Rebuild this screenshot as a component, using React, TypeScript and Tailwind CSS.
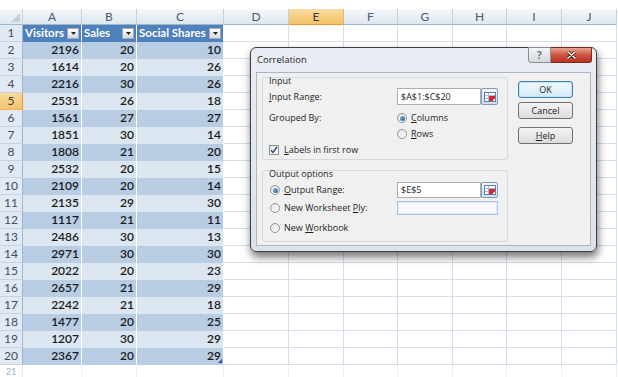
const cols = [
  { name: 'A', w: 'w-[59px]' },
  { name: 'B', w: 'w-[55px]' },
  { name: 'C', w: 'w-[87px]' },
  { name: 'D', w: 'w-[65px]' },
  { name: 'E', w: 'w-[55px]' },
  { name: 'F', w: 'w-[54px]' },
  { name: 'G', w: 'w-[55px]' },
  { name: 'H', w: 'w-[54px]' },
  { name: 'I', w: 'w-[55px]' },
  { name: 'J', w: 'w-[55px]' },
];

const data = [
  [2196, 20, 10],
  [1614, 20, 26],
  [2216, 30, 26],
  [2531, 26, 18],
  [1561, 27, 27],
  [1851, 30, 14],
  [1808, 21, 20],
  [2532, 20, 15],
  [2109, 20, 14],
  [2135, 29, 30],
  [1117, 21, 11],
  [2486, 30, 13],
  [2971, 30, 30],
  [2022, 20, 23],
  [2657, 21, 29],
  [2242, 21, 18],
  [1477, 20, 25],
  [1207, 30, 29],
  [2367, 20, 29],
];

const RowHead = ({ n }: { n: number }) => (
  <div
    className={`flex w-[23px] shrink-0 items-center justify-center border-r border-b text-[12px] ${
      n === 5
        ? 'border-r-[#f29436] border-b-[#f2b35e] bg-gradient-to-b from-[#f9d99b] to-[#f2c46c] text-[#3b3b3b]'
        : 'border-r-[#9eb6ce] border-b-[#c5d3e3] bg-[#e1e9f4] text-[#3f4d62]'
    }`}
  >
    {n}
  </div>
);

const Dropdown = () => (
  <div className="flex h-[11px] w-[12px] shrink-0 items-center justify-center border border-[#a3aab5] bg-gradient-to-b from-white to-[#d6dbe2]">
    <svg width="5" height="3" viewBox="0 0 5 3">
      <path d="M0 0h5L2.5 3z" fill="#222" />
    </svg>
  </div>
);

const EmptyCells = () => (
  <>
    {cols.slice(3).map((c) => (
      <div key={c.name} className={`${c.w} shrink-0 border-r border-b border-[#d6dee9]`} />
    ))}
  </>
);

const Radio = ({ checked }: { checked?: boolean }) => (
  <span className="flex h-[10px] w-[10px] shrink-0 items-center justify-center rounded-full border border-[#8f9499] bg-gradient-to-br from-[#dfe2e5] to-white">
    {checked && <span className="h-[5px] w-[5px] rounded-full bg-gradient-to-br from-[#86bbea] to-[#1b5a93]" />}
  </span>
);

const RefButton = ({ h }: { h: string }) => (
  <div className={`flex w-[17px] ${h} shrink-0 items-center justify-center rounded-[2px] border border-[#7f9db9] bg-gradient-to-b from-[#f3f7fc] to-[#d2deed]`}>
    <svg width="12" height="10" viewBox="0 0 12 10">
      <rect x="0.5" y="0.5" width="11" height="9" fill="#fff" stroke="#5a7fb0" />
      <path d="M1 3.5h10M1 6.5h10M4.5 1v8" stroke="#a9bdd8" />
      <path d="M5 4h6v2l-2.5 3H5z" fill="#d8262a" />
    </svg>
  </div>
);

const Btn = ({ children, primary, className = '' }: { children: React.ReactNode; primary?: boolean; className?: string }) => (
  <div
    className={`flex h-[17px] w-[55px] items-center justify-center rounded-[3px] border ${
      primary
        ? 'border-[#3c7fb1] bg-gradient-to-b from-[#f2f9fd] to-[#d3ebf9] shadow-[inset_0_0_0_1px_#bfe3f8]'
        : 'border-[#707070] bg-gradient-to-b from-[#f4f4f4] to-[#dcdcdc]'
    } ${className}`}
  >
    {children}
  </div>
);

export default function App() {
  return (
    <div className="relative h-[377px] w-[618px] overflow-hidden bg-white pt-[9px] font-['Lato',sans-serif]">
      {/* column headers */}
      <div className="flex h-[16px]">
        <div className="relative w-[23px] shrink-0 border-r border-b border-r-[#c3cfdd] border-b-[#9eb6ce] bg-gradient-to-b from-[#f5f8fb] to-[#dfe6ef]">
          <svg className="absolute right-[2px] bottom-[2px]" width="9" height="9" viewBox="0 0 9 9">
            <path d="M9 0v9H0z" fill="#c4cfdc" />
          </svg>
        </div>
        {cols.map((c) => (
          <div
            key={c.name}
            className={`${c.w} flex shrink-0 items-center justify-center border-r border-b text-[12px] ${
              c.name === 'E'
                ? 'border-r-[#f2b35e] border-b-[#f29436] bg-gradient-to-b from-[#f9dca2] to-[#f2c263] text-[#3b3b3b]'
                : 'border-r-[#c3cfdd] border-b-[#9eb6ce] bg-gradient-to-b from-[#f5f8fb] to-[#dfe6ef] text-[#4a5a70]'
            }`}
          >
            {c.name}
          </div>
        ))}
      </div>

      {/* table header row */}
      <div className="flex h-[17px]">
        <RowHead n={1} />
        {['Visitors', 'Sales', 'Social Shares'].map((t, i) => (
          <div
            key={t}
            className={`${cols[i].w} flex shrink-0 items-center justify-between border-r border-b border-r-white border-b-[#4f81bd] bg-[#4f81bd] pr-[2px] pl-[2px] text-[11.5px] font-bold text-white`}
          >
            <span>{t}</span>
            <Dropdown />
          </div>
        ))}
        <EmptyCells />
      </div>

      {/* data rows */}
      {data.map((vals, r) => {
        const n = r + 2;
        const band = n % 2 === 0 ? 'bg-[#b8cce4] border-b-[#b8cce4]' : 'bg-[#dce6f1] border-b-[#dce6f1]';
        return (
          <div key={n} className="flex h-[17px]">
            <RowHead n={n} />
            {vals.map((v, i) => (
              <div
                key={i}
                className={`${cols[i].w} ${band} relative flex shrink-0 items-center justify-end border-r border-b border-r-white pr-[2px] text-[12px] font-semibold text-[#1a1a1a]`}
              >
                {v}
                {n === 20 && i === 2 && (
                  <svg className="absolute right-[1px] bottom-[1px]" width="4" height="4" viewBox="0 0 4 4">
                    <path d="M4 0v4H0z" fill="#1f4e9c" />
                  </svg>
                )}
              </div>
            ))}
            <EmptyCells />
          </div>
        );
      })}

      {/* row 21, faded */}
      <div className="flex h-[12px]">
        <div className="flex w-[23px] shrink-0 items-end justify-center border-r border-[#e6ecf3] text-[9px] leading-[10px] text-[#a4afbf]">21</div>
        {cols.map((c) => (
          <div key={c.name} className={`${c.w} shrink-0 border-r border-[#eef2f7]`} />
        ))}
      </div>

      {/* Correlation dialog */}
      <div className="absolute top-[47px] left-[250px] h-[205px] w-[347px] rounded-[6px] border border-[#3f3f3f] bg-gradient-to-b from-[#e9eef4] to-[#dbe2ea] font-['Open_Sans',sans-serif] text-[9px] text-[#1e1e1e] shadow-[1px_5px_8px_rgba(0,0,0,0.55)]">
        <div className="flex h-[24px] items-center pl-[6px] text-[9.5px]">Correlation</div>
        <div className="absolute -top-px right-[4px] flex">
          <div className="flex h-[16px] w-[23px] items-center justify-center rounded-bl-[3px] border border-[#8a8f96] bg-gradient-to-b from-[#f3f5f7] to-[#d3d8de] text-[10px] font-bold text-[#6a7078]">
            ?
          </div>
          <div className="flex h-[16px] w-[41px] items-center justify-center rounded-br-[3px] border border-l-0 border-[#7a2a20] bg-gradient-to-b from-[#e9a495] via-[#cc5440] to-[#b9321e]">
            <svg width="9" height="8" viewBox="0 0 9 8">
              <path d="M1 1l7 6M8 1L1 7" stroke="#5a1a12" strokeWidth="3" strokeLinecap="round" />
              <path d="M1 1l7 6M8 1L1 7" stroke="#fff" strokeWidth="1.6" strokeLinecap="round" />
            </svg>
          </div>
        </div>

        <div className="mx-[5px] flex h-[174px] border border-[#a9b6c4] bg-[#f0f0f0]">
          <div className="pt-[4px] pl-[5px]">
            {/* Input group */}
            <div className="h-[83px] w-[246px] rounded-[3px] border border-[#d3d9df] pl-[6px]">
              <div className="-mt-[4px] h-[14px] leading-[14px]">Input</div>
              <div className="flex h-[17px] items-center">
                <span className="w-[128px]">
                  <u>I</u>nput Range:
                </span>
                <div className="flex h-[17px] w-[84px] items-center border border-[#abadb3] bg-white pl-[3px]">$A$1:$C$20</div>
                <RefButton h="h-[17px]" />
              </div>
              <div className="mt-[5px] flex h-[16px] items-center">
                <span className="w-[128px]">Grouped By:</span>
                <Radio checked />
                <span className="ml-[4px]">
                  <u>C</u>olumns
                </span>
              </div>
              <div className="flex h-[16px] items-center pl-[128px]">
                <Radio />
                <span className="ml-[4px]">
                  <u>R</u>ows
                </span>
              </div>
              <div className="flex h-[16px] items-center">
                <span className="flex h-[10px] w-[10px] items-center justify-center border border-[#8f9499] bg-gradient-to-br from-[#e2e4e7] to-white">
                  <svg width="8" height="8" viewBox="0 0 8 8">
                    <path d="M1 4.2l2 2.2L7 1" fill="none" stroke="#2c4a73" strokeWidth="1.4" />
                  </svg>
                </span>
                <span className="ml-[5px]">
                  <u>L</u>abels in first row
                </span>
              </div>
            </div>

            {/* Output group */}
            <div className="mt-[10px] h-[72px] w-[246px] rounded-[3px] border border-[#d3d9df] pl-[6px]">
              <div className="-mt-[4px] h-[14px] leading-[14px]">Output options</div>
              <div className="mt-px flex h-[16px] items-center">
                <span className="flex w-[128px] items-center pl-px">
                  <Radio checked />
                  <span className="ml-[4px]">
                    <u>O</u>utput Range:
                  </span>
                </span>
                <div className="flex h-[16px] w-[84px] items-center border border-[#abadb3] bg-white pl-[3px]">$E$5</div>
                <RefButton h="h-[16px]" />
              </div>
              <div className="flex h-[19px] items-center">
                <span className="flex w-[128px] items-center pl-px">
                  <Radio />
                  <span className="ml-[4px]">
                    New Worksheet <u>P</u>ly:
                  </span>
                </span>
                <div className="h-[14px] w-[101px] border border-[#a9c3df] bg-[#f7f9fb] shadow-[inset_0_0_0_1px_#e4edf7]" />
              </div>
              <div className="flex h-[21px] items-center pl-px">
                <Radio />
                <span className="ml-[4px]">
                  New <u>W</u>orkbook
                </span>
              </div>
            </div>
          </div>

          {/* buttons */}
          <div className="ml-[10px] flex flex-col pt-[8px]">
            <Btn primary>OK</Btn>
            <Btn className="mt-[4px]">Cancel</Btn>
            <Btn className="mt-[8px]">
              <span>
                <u>H</u>elp
              </span>
            </Btn>
          </div>
        </div>
      </div>
    </div>
  );
}
